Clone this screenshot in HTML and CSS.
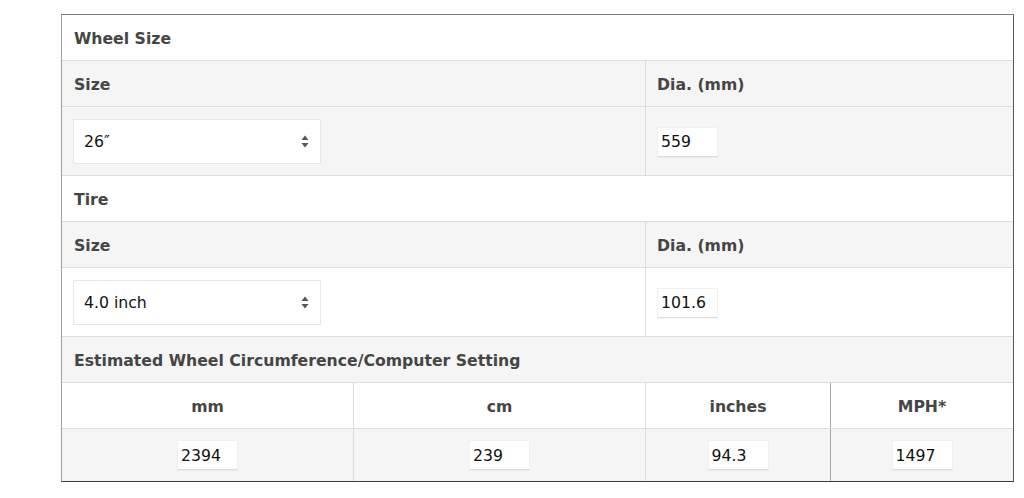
FILE: index.html
```html
<!DOCTYPE html>
<html lang="en">
<head>
<meta charset="utf-8">
<title>Wheel Size Calculator</title>
<link rel="stylesheet" href="styles.css">
</head>
<body>
<div class="calc">
  <div class="row row-title row-white">
    <div class="cell">Wheel Size</div>
  </div>
  <div class="row row-head row-gray split">
    <div class="cell">Size</div>
    <div class="cell">Dia. (mm)</div>
  </div>
  <div class="row row-ctrl row-gray split">
    <div class="cell">
      <div class="select-wrap">
        <select class="select"><option>26″</option></select>
        <svg class="arrows" width="8" height="13" viewBox="0 0 8 13"><path d="M4 0.5 L7.5 5 L0.5 5 Z M4 12.5 L7.5 8 L0.5 8 Z" fill="#555"/></svg>
      </div>
    </div>
    <div class="cell"><input class="num" type="text" value="559"></div>
  </div>
  <div class="row row-title row-white">
    <div class="cell">Tire</div>
  </div>
  <div class="row row-head row-gray split">
    <div class="cell">Size</div>
    <div class="cell">Dia. (mm)</div>
  </div>
  <div class="row row-ctrl row-white split">
    <div class="cell">
      <div class="select-wrap">
        <select class="select"><option>4.0 inch</option></select>
        <svg class="arrows" width="8" height="13" viewBox="0 0 8 13"><path d="M4 0.5 L7.5 5 L0.5 5 Z M4 12.5 L7.5 8 L0.5 8 Z" fill="#555"/></svg>
      </div>
    </div>
    <div class="cell"><input class="num" type="text" value="101.6"></div>
  </div>
  <div class="row row-title row-gray">
    <div class="cell">Estimated Wheel Circumference/Computer Setting</div>
  </div>
  <div class="row row-head row-white quad">
    <div class="cell">mm</div>
    <div class="cell">cm</div>
    <div class="cell">inches</div>
    <div class="cell strong-div">MPH*</div>
  </div>
  <div class="row row-vals row-gray quad">
    <div class="cell"><input class="num" type="text" value="2394"></div>
    <div class="cell"><input class="num" type="text" value="239"></div>
    <div class="cell"><input class="num" type="text" value="94.3"></div>
    <div class="cell strong-div"><input class="num" type="text" value="1497"></div>
  </div>
</div>
</body>
</html>
```

FILE: styles.css
```css
* { box-sizing: border-box; }

html, body {
  margin: 0;
  padding: 0;
  background: #ffffff;
}

body {
  padding: 14px 0 0 61px;
  font-family: "DejaVu Sans", Verdana, sans-serif;
}

.calc {
  width: 953px;
  border-top: 1px solid #7a7a7a;
  border-left: 1px solid #a0a0a0;
  border-right: 1px solid #5a5a5a;
  border-bottom: 1px solid #3a3a3a;
}

.row {
  display: grid;
  grid-template-columns: 1fr;
  border-bottom: 1px solid #dcdcdc;
}

.row:last-child { border-bottom: none; }

.row-white { background: #ffffff; }
.row-gray { background: #f5f5f5; }

.split { grid-template-columns: 584px 367px; }
.quad { grid-template-columns: 292px 292px 185px 182px; }

.split > .cell:first-child,
.quad > .cell:not(:last-child) {
  border-right: 1px solid #dcdcdc;
}

.quad > .cell:nth-child(3) { border-right-color: #a8a8a8; }

.cell {
  display: flex;
  align-items: center;
  padding: 0 12px;
}

.split > .cell:first-child { padding-left: 12px; }
.split > .cell:last-child { padding-left: 11px; }

.row-title, .row-head { height: 46px; }
.row-title .cell, .row-head .cell {
  font-weight: bold;
  font-size: 15.7px;
  color: #454545;
  padding-top: 2px;
}

.row-head.quad .cell { justify-content: center; }

.row-ctrl { height: 69px; }
.row-ctrl .cell { padding-top: 1px; }
.row-vals { height: 52px; }
.row-vals .cell { justify-content: center; padding: 0; }

.select-wrap {
  position: relative;
  width: 248px;
  height: 45px;
  margin-left: -1px;
}

.select {
  appearance: none;
  -webkit-appearance: none;
  width: 100%;
  height: 100%;
  margin: 0;
  border: 1px solid #e6e6e6;
  border-radius: 0;
  background: #ffffff;
  padding: 0 0 0 10px;
  font-family: "DejaVu Sans", Verdana, sans-serif;
  font-size: 15.7px;
  color: #111111;
  outline: none;
}

.arrows {
  position: absolute;
  right: 12px;
  top: 16px;
  pointer-events: none;
}

.num {
  width: 61px;
  height: 30px;
  margin: 0;
  border: 1px solid #f0f0f0;
  border-bottom-color: #dddddd;
  border-radius: 0;
  background: #ffffff;
  padding: 0 0 0 3px;
  font-family: "DejaVu Sans", Verdana, sans-serif;
  font-size: 15.7px;
  color: #111111;
  outline: none;
  box-shadow: 0 1px 0 rgba(0,0,0,0.04);
}
```
